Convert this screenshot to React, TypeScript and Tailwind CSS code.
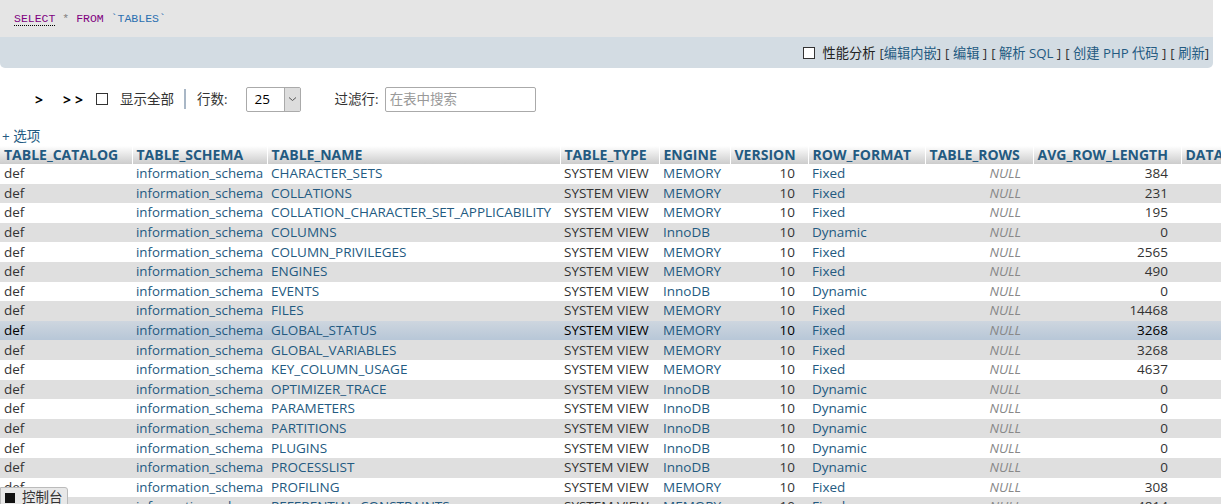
import React from "react";

const rows: [string, string, string, string, string][] = [
  ["CHARACTER_SETS", "MEMORY", "Fixed", "384", "w"],
  ["COLLATIONS", "MEMORY", "Fixed", "231", "g"],
  ["COLLATION_CHARACTER_SET_APPLICABILITY", "MEMORY", "Fixed", "195", "w"],
  ["COLUMNS", "InnoDB", "Dynamic", "0", "g"],
  ["COLUMN_PRIVILEGES", "MEMORY", "Fixed", "2565", "w"],
  ["ENGINES", "MEMORY", "Fixed", "490", "g"],
  ["EVENTS", "InnoDB", "Dynamic", "0", "w"],
  ["FILES", "MEMORY", "Fixed", "14468", "g"],
  ["GLOBAL_STATUS", "MEMORY", "Fixed", "3268", "h"],
  ["GLOBAL_VARIABLES", "MEMORY", "Fixed", "3268", "g"],
  ["KEY_COLUMN_USAGE", "MEMORY", "Fixed", "4637", "w"],
  ["OPTIMIZER_TRACE", "InnoDB", "Dynamic", "0", "g"],
  ["PARAMETERS", "InnoDB", "Dynamic", "0", "w"],
  ["PARTITIONS", "InnoDB", "Dynamic", "0", "g"],
  ["PLUGINS", "InnoDB", "Dynamic", "0", "w"],
  ["PROCESSLIST", "InnoDB", "Dynamic", "0", "g"],
  ["PROFILING", "MEMORY", "Fixed", "308", "w"],
  ["REFERENTIAL_CONSTRAINTS", "MEMORY", "Fixed", "4814", "g"],
];

const headers = [
  "TABLE_CATALOG",
  "TABLE_SCHEMA",
  "TABLE_NAME",
  "TABLE_TYPE",
  "ENGINE",
  "VERSION",
  "ROW_FORMAT",
  "TABLE_ROWS",
  "AVG_ROW_LENGTH",
  "DATA",
];

const widths = [132, 135, 293, 99, 71, 78, 117, 108, 148, 120];

function Box() {
  return <span className="inline-block w-[12px] h-[12px] border border-[#333] bg-white align-middle" />;
}

export default function App() {
  const font = { fontFamily: '"Open Sans", "Noto Sans CJK SC", sans-serif' };
  return (
    <div className="w-[1221px] h-[504px] overflow-hidden bg-white relative text-[13.5px] text-[#333]" style={font}>
      {/* SQL panel */}
      <div className="w-[1213px]">
        <div className="h-[37px] bg-[#e5e5e5] pl-[14px] pt-[7px]">
          <span className="text-[11.5px] leading-[14px]" style={{ fontFamily: '"Liberation Mono", monospace' }}>
            <span className="text-[#800080] border-b border-dotted border-black">SELECT</span>
            <span className="text-[#808080]"> * </span>
            <span className="text-[#800080]">FROM </span>
            <span className="text-[#2a6fb0]">`TABLES`</span>
          </span>
        </div>
        <div className="h-[31px] bg-[#d3dce3] rounded-b-[5px] flex items-center justify-end pr-[4px] pt-[1px] leading-[16px] text-[13.25px]">
          <Box />
          <span className="ml-[7px] text-[#222]">性能分析</span>
          <span className="ml-[4px]">[<a className="text-[#235a81]">编辑内嵌</a>]</span>
          <span className="ml-[4px]">[ <a className="text-[#235a81]">编辑</a> ]</span>
          <span className="ml-[4px]">[ <a className="text-[#235a81]">解析 SQL</a> ]</span>
          <span className="ml-[4px]">[ <a className="text-[#235a81]">创建 PHP 代码</a> ]</span>
          <span className="ml-[4px]">[ <a className="text-[#235a81]">刷新</a>]</span>
        </div>
      </div>

      {/* navigation */}
      <div className="h-[42px] mt-[10px] flex items-center text-[#333]">
        <span className="ml-[35px] font-bold text-black text-[14px]">&gt;</span>
        <span className="ml-[20px] font-bold text-black text-[14px] tracking-[4px]">&gt;&gt;</span>
        <span className="ml-[9px] flex items-center"><Box /></span>
        <span className="ml-[12px]">显示全部</span>
        <span className="ml-[10px] w-[2px] h-[20px] bg-[#a9b7c6]" />
        <span className="ml-[11px]">行数:</span>
        <div className="ml-[18px] w-[55px] h-[25px] border border-[#aaa] rounded-[2px] flex bg-white">
          <span className="flex-1 pl-[8px] leading-[23px] text-black">25</span>
          <span className="w-[16px] bg-[#ddd] border-l border-[#aaa] flex items-center justify-center">
            <svg width="9" height="6" viewBox="0 0 9 6">
              <path d="M1 1.5 L4.5 4.5 L8 1.5" stroke="#555" strokeWidth="1" fill="none" />
            </svg>
          </span>
        </div>
        <span className="ml-[34px]">过滤行:</span>
        <div className="ml-[6px] w-[151px] h-[25px] border border-[#aaa] rounded-[2px] pl-[4px] leading-[23px] text-[#999]">
          在表中搜索
        </div>
      </div>

      <div className="mt-[8px] pl-[2px] leading-[16px] text-[#235a81]">+ 选项</div>

      <table className="mt-[2px] border-collapse table-fixed w-[1301px]">
        <colgroup>
          {widths.map((w, i) => (
            <col key={i} style={{ width: w }} />
          ))}
        </colgroup>
        <thead>
          <tr className="h-[18px] bg-gradient-to-b from-white to-[#cccccc]">
            {headers.map((h, i) => (
              <th
                key={i}
                className="text-left font-bold text-[14px] text-[#235a81] pl-[4px] p-0 leading-[18px] border-r border-white whitespace-nowrap overflow-hidden"
              >
                {h}
              </th>
            ))}
          </tr>
        </thead>
        <tbody>
          {rows.map((r, i) => {
            const bg = r[4] === "g" ? "bg-[#dfdfdf]" : r[4] === "h" ? "bg-gradient-to-b from-[#ced6df] to-[#b6c6d7]" : "bg-white";
            const dark = r[4] === "h" ? "text-black" : "text-[#333]";
            return (
              <tr key={i} className={`h-[19.6px] ${bg} leading-[17px]`}>
                <td className={`pl-[4px] ${dark}`}>def</td>
                <td className="pl-[4px] text-[#235a81] whitespace-nowrap">
                  <span className="text-[13.3px]">information_schema</span>
                </td>
                <td className="pl-[4px] text-[#235a81] whitespace-nowrap">{r[0]}</td>
                <td className={`pl-[4px] ${dark} whitespace-nowrap`}>SYSTEM VIEW</td>
                <td className="pl-[4px] text-[#235a81]">{r[1]}</td>
                <td className={`pr-[13px] text-right ${dark}`}>10</td>
                <td className="pl-[4px] text-[#235a81]">{r[2]}</td>
                <td className="pr-[12px] text-right italic text-[#888]">NULL</td>
                <td className={`pr-[13px] text-right ${dark}`}>{r[3]}</td>
                <td className={`pr-[13px] text-right ${dark}`}></td>
              </tr>
            );
          })}
        </tbody>
      </table>

      {/* console */}
      <div className="absolute left-0 top-[487px] w-[68px] h-[20px] bg-[#e8e8e8] border border-[#bbb] rounded-tr-[3px] flex items-start pt-[2px] pl-[4px] leading-[15px]">
        <span className="w-[10px] h-[10px] bg-[#111] mt-[3px]" />
        <span className="ml-[7px] text-[#333]">控制台</span>
      </div>
    </div>
  );
}
